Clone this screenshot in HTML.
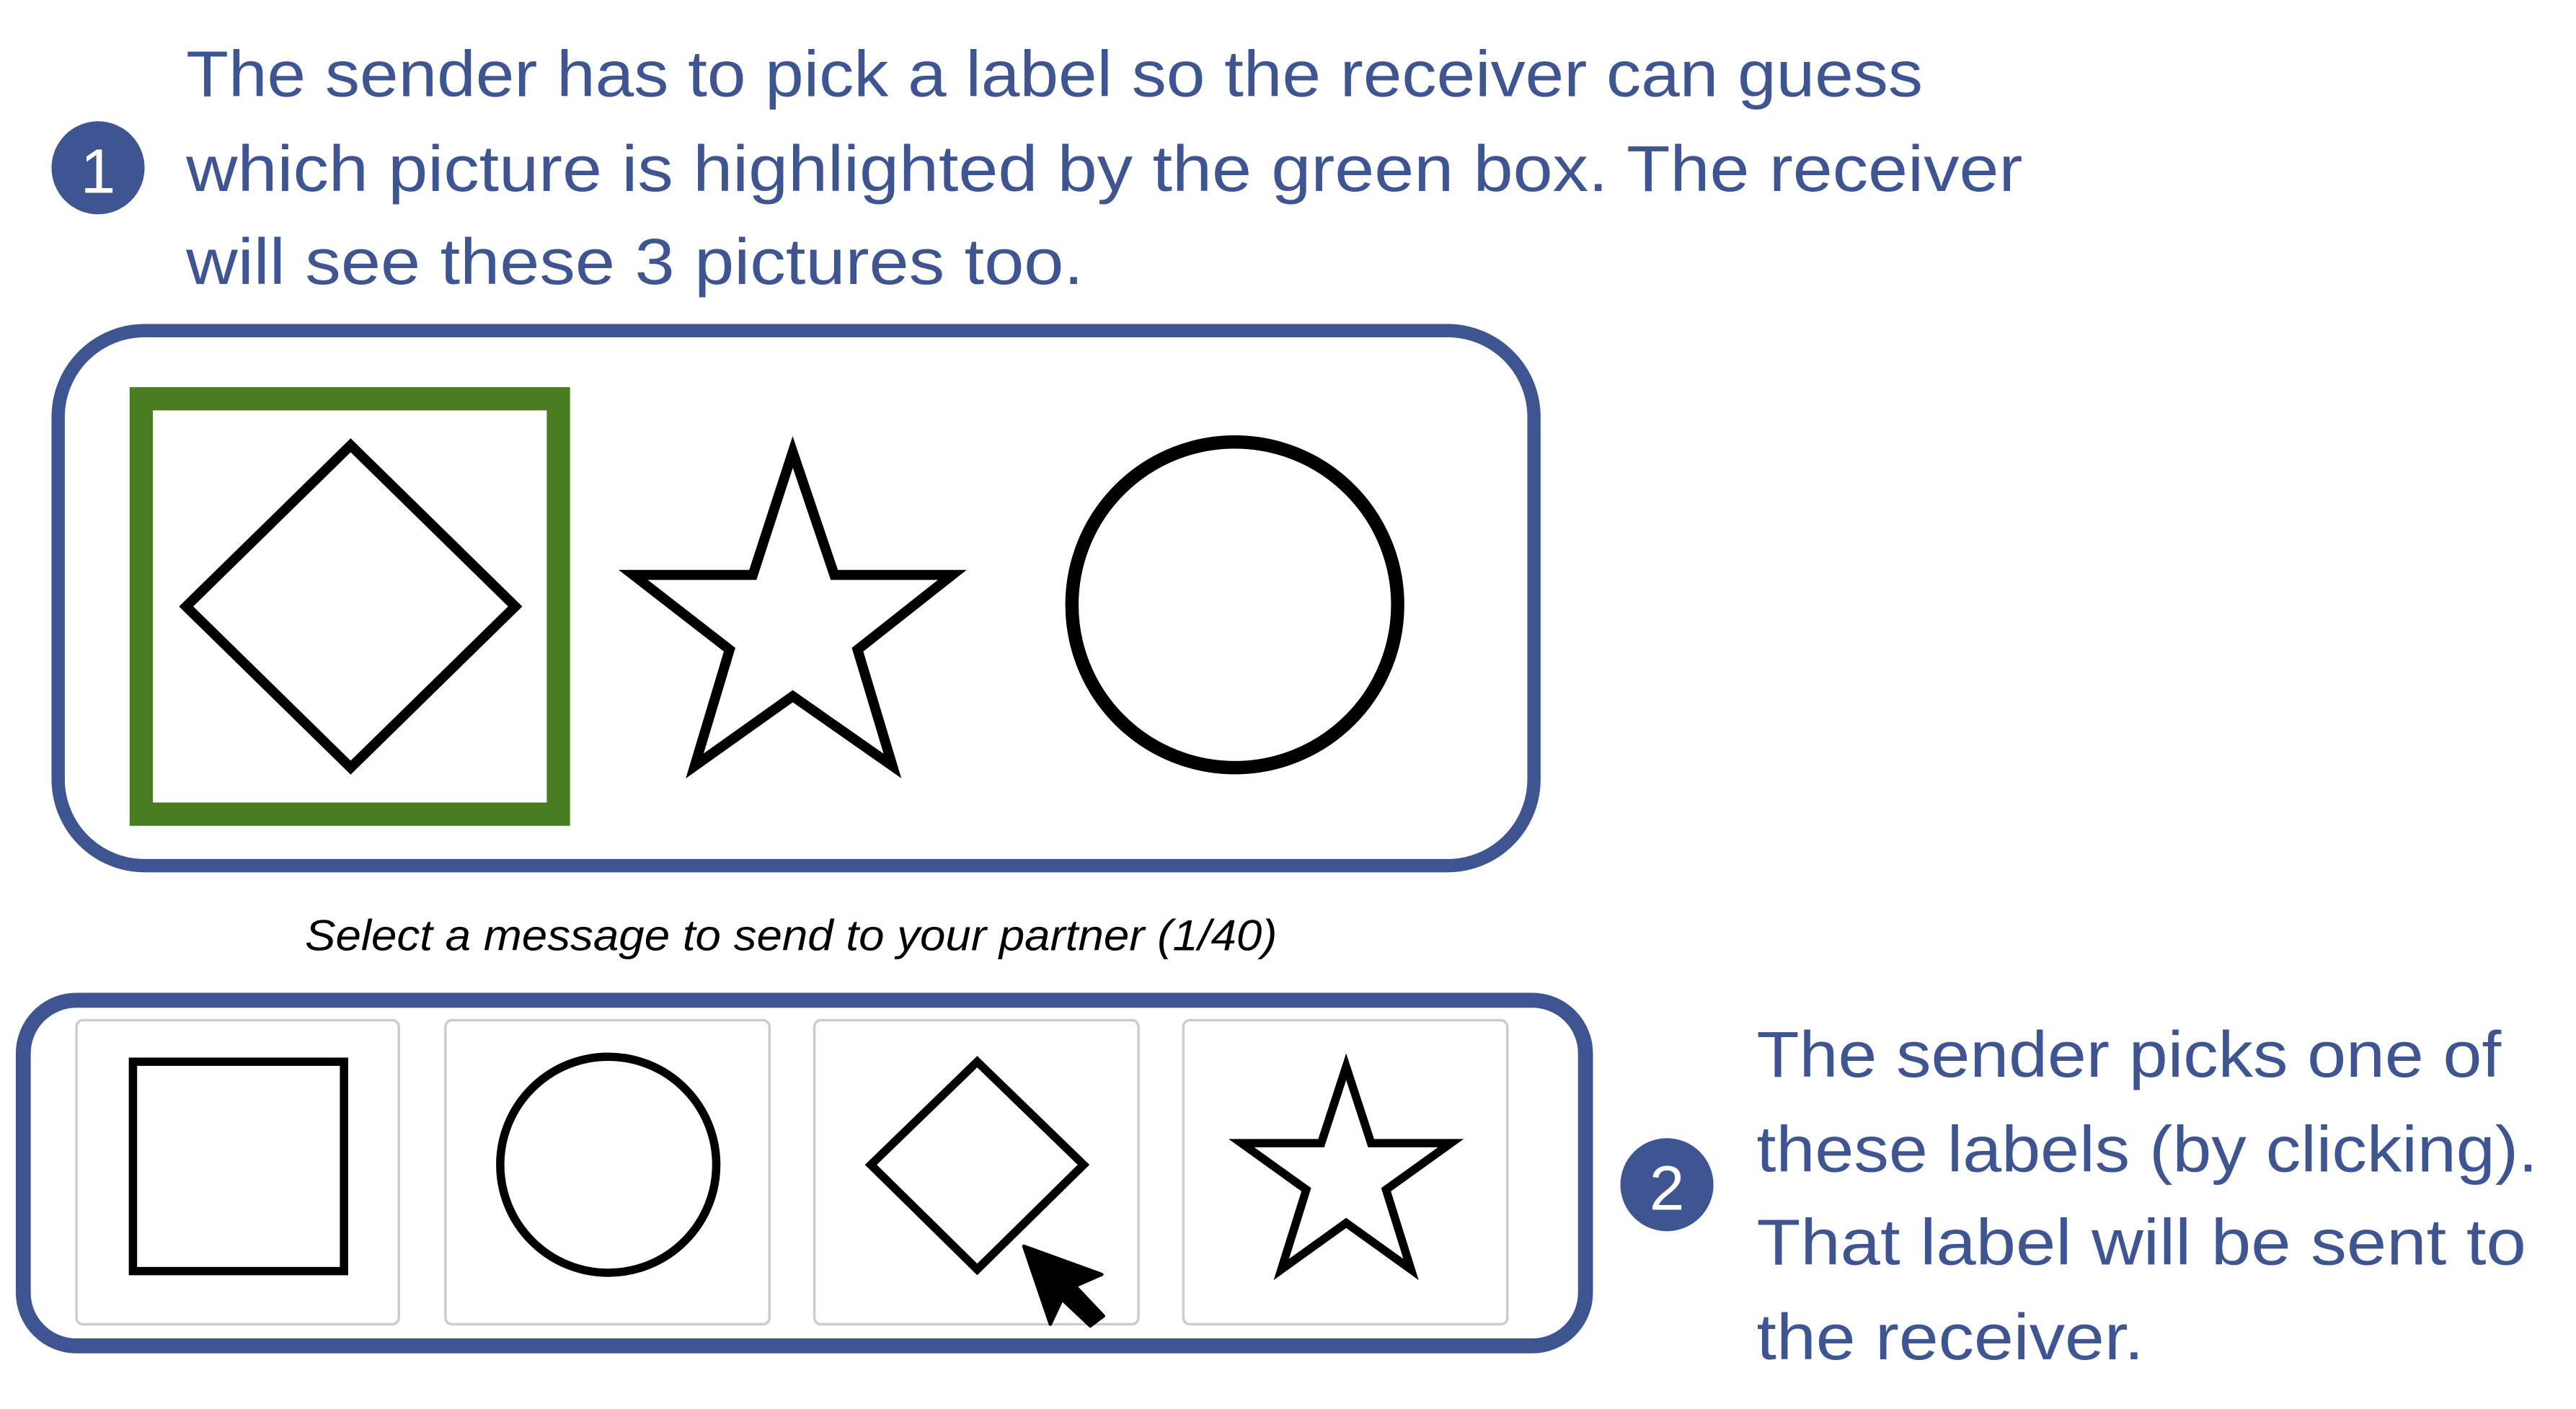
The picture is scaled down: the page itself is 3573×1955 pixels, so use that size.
<!DOCTYPE html>
<html><head><meta charset="utf-8"><style>
html,body{margin:0;padding:0;background:#fff;width:3573px;height:1955px;overflow:hidden}
svg{display:block}
text{font-family:"Liberation Sans",sans-serif}
</style></head><body>
<svg width="3573" height="1955" viewBox="0 0 1550 848" preserveAspectRatio="none" xmlns="http://www.w3.org/2000/svg">
<g fill="#3f5592" font-size="39">
<text x="112" y="58" textLength="1045" lengthAdjust="spacingAndGlyphs">The sender has to pick a label so the receiver can guess</text>
<text x="112" y="115" textLength="1105" lengthAdjust="spacingAndGlyphs">which picture is highlighted by the green box. The receiver</text>
<text x="112" y="171" textLength="540" lengthAdjust="spacingAndGlyphs">will see these 3 pictures too.</text>
<text x="1057" y="648" textLength="448" lengthAdjust="spacingAndGlyphs">The sender picks one of</text>
<text x="1057" y="705" textLength="470" lengthAdjust="spacingAndGlyphs">these labels (by clicking).</text>
<text x="1057" y="761" textLength="463" lengthAdjust="spacingAndGlyphs">That label will be sent to</text>
<text x="1057" y="818" textLength="233" lengthAdjust="spacingAndGlyphs">the receiver.</text>
</g>
<circle cx="59" cy="101" r="28" fill="#3f5592"/>
<text x="59" y="116" fill="#fff" font-size="38" text-anchor="middle">1</text>
<circle cx="1003" cy="713" r="28" fill="#3f5592"/>
<text x="1003" y="728" fill="#fff" font-size="38" text-anchor="middle">2</text>

<rect x="35" y="199" width="888" height="322" rx="52" fill="none" stroke="#3f5592" stroke-width="8"/>
<rect x="85" y="240" width="251" height="250" fill="none" stroke="#4a7c22" stroke-width="14"/>
<polygon points="211,268 310,365 211,462 112,365" fill="none" stroke="#000" stroke-width="6"/>
<polygon points="477,272 453,346 381,346 439,391 418,461 477,419 537,461 516,391 573,346 502,346" fill="none" stroke="#000" stroke-width="6"/>
<circle cx="743" cy="364" r="98" fill="none" stroke="#000" stroke-width="8"/>

<text x="476" y="572" font-size="26" font-style="italic" text-anchor="middle" fill="#000" textLength="585" lengthAdjust="spacingAndGlyphs">Select a message to send to your partner (1/40)</text>

<rect x="14" y="602" width="940" height="208" rx="32" fill="none" stroke="#3f5592" stroke-width="9"/>
<g fill="#fff" stroke="#ccc" stroke-width="1.5">
<rect x="46" y="614" width="194" height="183" rx="4"/>
<rect x="268" y="614" width="195" height="183" rx="4"/>
<rect x="490" y="614" width="195" height="183" rx="4"/>
<rect x="712" y="614" width="195" height="183" rx="4"/>
</g>
<rect x="80" y="639" width="127" height="126" fill="none" stroke="#000" stroke-width="5"/>
<circle cx="366" cy="701" r="65" fill="none" stroke="#000" stroke-width="5"/>
<polygon points="588,639 652,701 588,764 524,701" fill="none" stroke="#000" stroke-width="5"/>
<polygon points="810,642 795,688 747,688 786,716 771,764 810,736 849,764 834,716 873,688 825,688" fill="none" stroke="#000" stroke-width="5"/>
<polygon points="616,750 663,767 647,774 664,792 656,798 639,782 632,797" fill="#000" stroke="#000" stroke-width="2" stroke-linejoin="round"/>
</svg>
</body></html>
